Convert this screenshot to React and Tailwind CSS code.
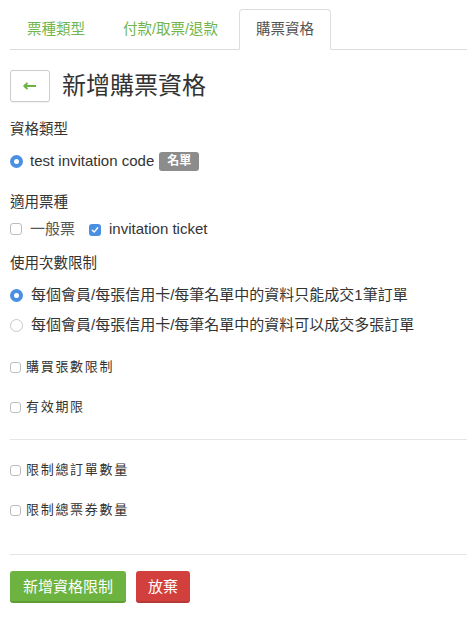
import { useState } from "react"

const font = { fontFamily: '"Liberation Sans", "Noto Sans CJK TC", sans-serif' }

function Radio({ checked }) {
    return checked ? (
        <span className="inline-flex h-[13px] w-[13px] shrink-0 items-center justify-center rounded-full bg-[#4a90e2]">
            <span className="h-[5px] w-[5px] rounded-full bg-white" />
        </span>
    ) : (
        <span className="inline-block h-[13px] w-[13px] shrink-0 rounded-full border border-[#c8c8c8] bg-white" />
    )
}

function Check({ checked, size = "h-[12px] w-[12px]" }) {
    return checked ? (
        <span className={`inline-flex ${size} shrink-0 items-center justify-center rounded-[3px] bg-[#4a90e2]`}>
            <svg width="8" height="8" viewBox="0 0 8 8" fill="none">
                <path d="M1.3 4.2 L3.2 6 L6.7 1.8" stroke="white" strokeWidth="1.4" strokeLinecap="round" strokeLinejoin="round" />
            </svg>
        </span>
    ) : (
        <span className={`inline-block ${size} shrink-0 rounded-[3px] border border-[#bdbdbd] bg-white`} />
    )
}

export default function App() {
    const [tab] = useState(2)
    const tabs = [
        { label: "票種類型", pad: "px-4" },
        { label: "付款/取票/退款", pad: "px-[18px]" },
        { label: "購票資格", pad: "px-4" },
    ]
    return <div className="min-h-[619px] w-[467px] bg-white pl-[10px] text-[#333]" style={font}>
        {/* tabs */}
        <div className="mt-[9px] flex border-b border-[#ddd]">
            {tabs.map((t, i) => (
                <div key={t.label}
                    className={i == tab
                        ? `-mb-px mr-0.5 rounded-t-[4px] border border-[#ddd] border-b-white bg-white ${t.pad} py-[9px] text-[14.5px] leading-5 text-[#555]`
                        : `mr-0.5 ${t.pad} border border-transparent py-[9px] text-[14.5px] leading-5 text-[#72b54a]`}>
                    {t.label}
                </div>
            ))}
        </div>

        {/* header */}
        <div className="mt-[20px] flex items-center">
            <div className="flex h-[32px] w-[40px] items-center justify-center rounded-[3px] border border-[#ccc] bg-white shadow-[0_1px_1px_rgba(0,0,0,0.06)]">
                <svg width="14" height="8" viewBox="0 0 14 8" fill="none">
                    <path d="M1.5 4 H13" stroke="#6db33f" strokeWidth="2" />
                    <path d="M4.5 1 L1.2 4 L4.5 7" stroke="#6db33f" strokeWidth="1.8" strokeLinejoin="round" />
                </svg>
            </div>
            <h1 className="ml-[12px] text-[24px] leading-8 text-[#333]">新增購票資格</h1>
        </div>

        {/* 資格類型 */}
        <div className="mt-[17px] text-[14.5px] leading-5">資格類型</div>
        <div className="mt-[12px] flex items-center">
            <Radio checked />
            <span className="ml-[7px] text-[15px] leading-5">test invitation code</span>
            <span className="ml-[5px] rounded-[3px] bg-[#8c8c8c] px-[8px] py-[2px] text-[12px] font-bold leading-[15px] text-white">名單</span>
        </div>

        {/* 適用票種 */}
        <div className="mt-[21px] text-[14.5px] leading-5">適用票種</div>
        <div className="mt-[5px] flex items-center">
            <Check />
            <span className="ml-[8px] text-[15px] leading-5 text-[#555]">一般票</span>
            <span className="ml-[14px]"><Check checked /></span>
            <span className="ml-[8px] text-[15px] leading-5">invitation ticket</span>
        </div>

        {/* 使用次數限制 */}
        <div className="mt-[12px] text-[14.5px] leading-5">使用次數限制</div>
        <div className="mt-[12px] flex items-center">
            <Radio checked />
            <span className="ml-[8px] text-[15px] leading-5">每個會員/每張信用卡/每筆名單中的資料只能成交1筆訂單</span>
        </div>
        <div className="mt-[10px] flex items-center">
            <Radio />
            <span className="ml-[8px] text-[15px] leading-5">每個會員/每張信用卡/每筆名單中的資料可以成交多張訂單</span>
        </div>

        <div className="mt-[22px] flex items-center">
            <Check size="h-[11px] w-[11px]" />
            <span className="ml-[5px] text-[13px] leading-5 tracking-[1.7px]">購買張數限制</span>
        </div>
        <div className="mt-[20px] flex items-center">
            <Check size="h-[11px] w-[11px]" />
            <span className="ml-[5px] text-[13px] leading-5 tracking-[1.7px]">有效期限</span>
        </div>

        <div className="mt-[22px] border-t border-[#e5e5e5]" />

        <div className="mt-[20px] flex items-center">
            <Check size="h-[11px] w-[11px]" />
            <span className="ml-[5px] text-[13px] leading-5 tracking-[1.7px]">限制總訂單數量</span>
        </div>
        <div className="mt-[20px] flex items-center">
            <Check size="h-[11px] w-[11px]" />
            <span className="ml-[5px] text-[13px] leading-5 tracking-[1.7px]">限制總票券數量</span>
        </div>

        <div className="mt-[34px] border-t border-[#e5e5e5]" />

        {/* actions */}
        <div className="mt-[16px] flex gap-[10px]">
            <button className="h-[32px] rounded-[3px] bg-[#6db33f] px-[13px] text-[15px] text-white shadow-[inset_0_-2px_0_rgba(0,0,0,0.12)]">新增資格限制</button>
            <button className="h-[32px] rounded-[3px] bg-[#d2403d] px-[12px] text-[15px] text-white shadow-[inset_0_-2px_0_rgba(0,0,0,0.12)]">放棄</button>
        </div>
    </div>
}
